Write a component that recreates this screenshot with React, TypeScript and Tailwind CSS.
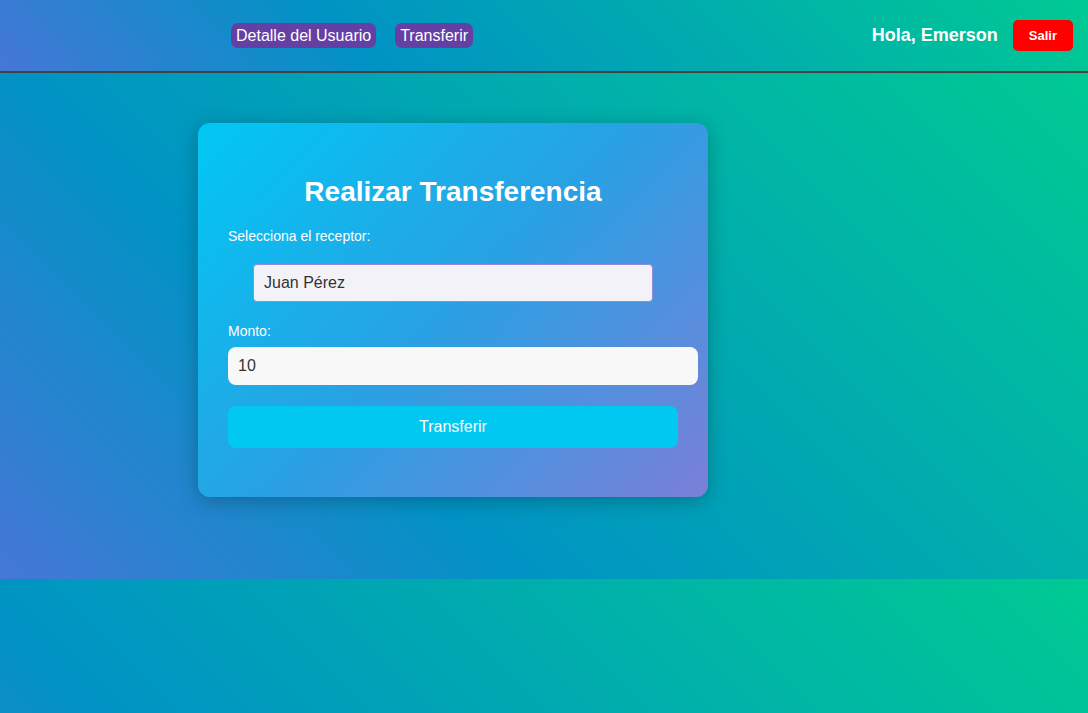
import React from "react";

export default function App() {
  return (
    <div className="min-h-screen w-full font-['Liberation_Sans',Arial,sans-serif] bg-[linear-gradient(45deg,#4677d7_0%,#0093c4_33%,#00ca93_100%)] bg-size-[100%_579px] bg-repeat">
      <header className="flex h-[73px] items-center border-b-2 border-[#424242] bg-[linear-gradient(45deg,#4677d7_0%,#0093c4_33%,#00ca93_100%)]">
        <nav className="ml-[231px] flex items-center gap-[19px]">
          <span className="rounded-[7px] bg-[#6540a4] px-[5px] py-[3px] text-[16px] leading-[19px] text-white">
            Detalle del Usuario
          </span>
          <span className="rounded-[7px] bg-[#6540a4] px-[5px] py-[3px] text-[16px] leading-[19px] text-white">
            Transferir
          </span>
        </nav>
        <div className="ml-auto mr-[15px] flex items-center gap-[15px]">
          <span className="text-[18px] font-bold leading-[21px] text-white">Hola, Emerson</span>
          <button className="h-[31px] rounded-[5px] bg-[#ff0000] px-[16px] text-[13px] font-bold text-white">
            Salir
          </button>
        </div>
      </header>
      <main className="h-[506px] pl-[198px] pt-[50px] bg-[linear-gradient(45deg,#4677d7_0%,#0093c4_33%,#00ca93_100%)]">
        <div className="w-[510px] rounded-[12px] bg-[linear-gradient(135deg,#00c8f4_0%,#2aa0e3_50%,#7b7fd8_100%)] px-[30px] pt-[53px] pb-[49px] shadow-[0_4px_20px_rgba(0,0,0,0.25)]">
          <h2 className="text-center text-[28px] font-bold leading-[32px] text-white">Realizar Transferencia</h2>
          <div className="mt-[20px] text-[14px] leading-[16px] text-white">Selecciona el receptor:</div>
          <div className="mt-[20px] flex justify-center">
            <div className="flex h-[38px] w-[400px] items-center rounded-[4px] border border-[#958ae2] bg-[#f3f2f8] pl-[10px] text-[16px] text-[#333]">
              Juan Pérez
            </div>
          </div>
          <div className="mt-[21px] text-[14px] leading-[16px] text-white">Monto:</div>
          <div className="mt-[8px] flex h-[38px] w-[470px] items-center rounded-[8px] bg-[#f8f8f8] pl-[10px] text-[16px] text-[#333]">
            10
          </div>
          <button className="mt-[21px] h-[42px] w-full rounded-[8px] bg-[#00c8f0] text-[16px] text-white">
            Transferir
          </button>
        </div>
      </main>
    </div>
  );
}
